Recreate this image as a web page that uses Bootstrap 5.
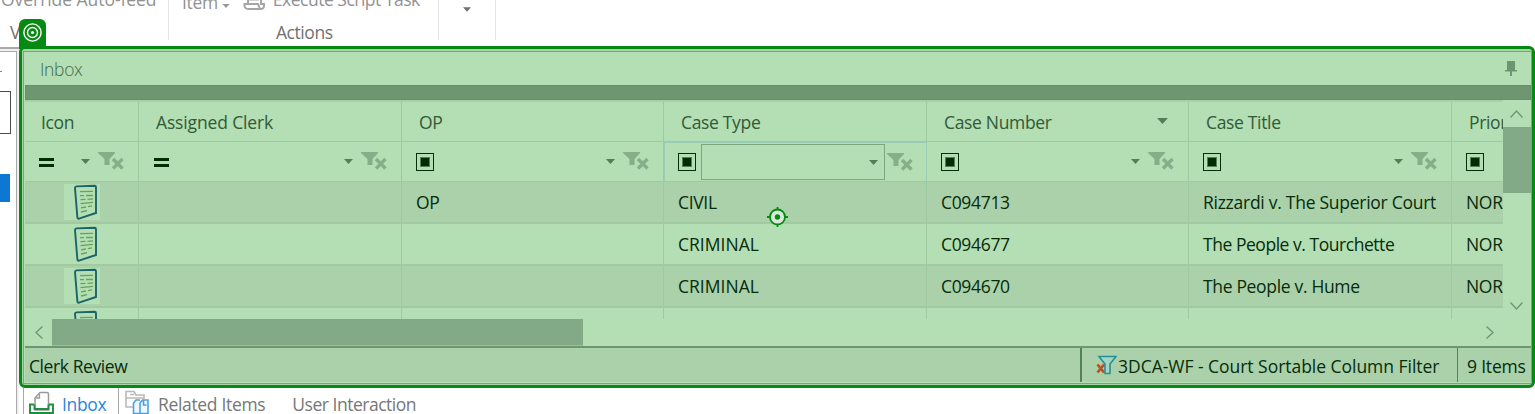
<!DOCTYPE html>
<html lang="en">
<head>
<meta charset="utf-8">
<title>Inbox</title>
<link href="https://cdn.jsdelivr.net/npm/bootstrap@5.3.0/dist/css/bootstrap.min.css" rel="stylesheet">
<style>
body{width:1535px;height:414px;overflow:hidden;background:#fff;font:17.5px/24px "Open Sans","Noto Sans",sans-serif;color:#062c0a;letter-spacing:-.33px;white-space:nowrap}
svg{display:block;flex:none}
.ribbon{height:46px;color:#707070}
.rgroup{height:40px;border-right:1px solid #e4e4e4;position:relative}
.cmd{height:15px;color:#929292;display:flex}
.cmd>span{display:block;margin-top:-13px}
.side{width:19px;height:367px;background:#f0f0f0;border-top:2px solid #a9a9a9;margin-top:1px}
.side-in{width:17px;height:370px;background:#fff;border:1px solid #a9a9a9;border-left:0;margin-top:2px}
.side-tick{width:2px;height:1px;background:#888;margin-top:19px}
.side-box{width:11px;height:43px;border:1px solid #4c4a50;border-left:0;margin-top:19px}
.side-sel{width:10px;height:28px;background:#0d78d4;border:1px solid #7bb2e3;border-left:0;outline:1px solid #0d78d4;outline-offset:-1px;margin-top:40px}
.work{height:342px}
.panel{width:1516px;height:342px;border:3px solid #078a12;border-radius:6px;background:#acd2ac;padding:2px 0 0 1px}
.panel-in{border:1px solid #7ba57e;height:333px;padding-left:1px;background:#b4deb4}
.tag-badge{left:19px;top:19px;width:27px;height:30px;background:#078a12;border-radius:6px 6px 0 0}
.cap{height:33px;background:#b4deb4;color:#41694a;padding:0 14px 0 15px}
.cap span{font-size:17.5px;font-weight:300;margin-top:5px}
.strip{height:15px;background:#6d9671;border:1px solid #66906b}
.gridwrap{height:219px;background:#b4deb4}
.dgrid{width:1478px;overflow:hidden}
.grow{display:grid;grid-template-columns:114px 263px 262px 263px 262px 263px 51px}
.grow>div{border-right:1px solid #9fc9a1;overflow:hidden;display:flex;align-items:center}
.grow>div:last-child{border-right:0}
.ghead{height:42px;border-top:2px solid #a7d0a8;border-bottom:1px solid #9fc9a1;color:#315a37}
.ghead>div{padding-left:17px;padding-top:1px}
.ghead>div:first-child{padding-left:16px}
.gfilt{height:40px;border-bottom:1px solid #9fc9a1}
.gfilt>div{padding-left:14px}
.gfilt>div:first-child{padding-left:13px}
.grec{height:42px;border-bottom:2px solid #a1caa3}
.grec>div{padding-left:14px}
.alt{background:#aad1aa}
.thumb{width:36px;height:36px;background:#b4deb4;margin-left:25px}
.eqs{width:15px;height:9px;border-top:3px solid #032c05;border-bottom:3px solid #032c05;margin:2px 0 0 1px}
.chk{width:18px;height:18px;border:1.5px solid #043007;padding:3px}
.chk:after{content:"";display:block;width:10px;height:10px;background:#032c05;border:1px solid #55805a}
.clr{margin-right:14px;margin-left:8px}
.combo{width:184px;height:36px;border:1px solid #7da680;padding-right:6px;margin-left:5px}
.gfilt>.active-cell{border-left:1px solid #99cdb8;border-right-color:#99cdb8;border-top:1px solid #99cdb8;padding-left:13px}
.vbar{width:28px;background:#b4deb4}
.vthumb{height:66px;background:#83aa86}
.hbar{height:27px;background:#b4deb4}
.hthumb{width:531px;height:27px;background:#83aa86;border-bottom:1px solid #98c09a}
.stat{height:36px;border-top:2px solid #6d9671;background:#aad1aa}
.stat .seg{border-left:2px solid #54805a;height:34px;padding-top:2px}
.wide{letter-spacing:.02px}
.aim{left:767px;top:207px}
.tabs{height:26px;color:#777}
.tabs span{margin-top:4px}
.tab-on{width:96px;margin-left:23px;border-left:1px solid #a9a9a9;border-right:1px solid #a9a9a9;color:#2c86d6}
</style>
</head>
<body>
<svg width="0" height="0" class="position-absolute"><defs>
<symbol id="arrow" viewBox="0 0 9 5"><path d="M0 0h9L4.500 5z" fill="#527f58"/></symbol>
<symbol id="clear" viewBox="0 0 26 19"><path d="M0 0h17v1l-5.500 6v6h-5V7L0 1z" fill="#86ae88"/><path d="M15 7l9.500 9.500M24.500 7L15 16.500" stroke="#86ae88" stroke-width="3.300"/></symbol>
<symbol id="doc" viewBox="0 0 36 36"><path d="M11 4Q11 2.500 12.500 2.400L30.500 1.800Q32 1.800 32 3.300V29L15 34.700Q13.500 35 13.400 33.500z" fill="#b4deb4" stroke="#1c6468" stroke-width="1.900"/><path d="M16 7.700l13-.4M16 11.700h4m2-.2h7M16.500 15.700l5-.4m2 0l5.500-.5M16.500 19.700l12.500-1.400M17 23.800l5-.8m2-.4l4-.8M17 28l6-1.400" stroke="#66a25a" stroke-width="1.300" fill="none"/></symbol>
</defs></svg>

<header class="ribbon d-flex">
  <div class="rgroup" style="width:169px"><div class="cmd ps-1"><span style="margin-left:-3px;letter-spacing:-.05px">Override Auto-feed</span></div><div style="margin:5px 0 0 10px">V</div></div>
  <div class="rgroup" style="width:270px">
    <div class="cmd"><span style="margin:-10px 0 0 13px">Item</span><svg class="ms-1" style="margin-top:4px" width="8" height="4" viewBox="0 0 9 5"><path d="M0 0h9L4.500 5z" fill="#999"/></svg>
    <svg style="margin:-6px 0 0 13px" width="23" height="17" viewBox="0 0 23 17"><path d="M5 3v7H1.500q-.5 5 4 5H18q3.500 0 3-5H18V3M5 10h10l2 5M6 5.500h10" fill="none" stroke="#a5a5a5" stroke-width="2"/></svg><span style="margin-left:7px;letter-spacing:-.5px">Execute Script Task</span></div>
    <div style="margin:5px 0 0 107px;letter-spacing:-.45px">Actions</div>
  </div>
  <div class="rgroup" style="width:57px"><svg style="margin:7px 0 0 24px" width="8" height="5" viewBox="0 0 9 5"><path d="M0 0h9L4.500 5z" fill="#707070"/></svg></div>
</header>

<main class="work d-flex">
  <aside class="side"><div class="side-in"><div class="side-tick"></div><div class="side-box"></div><div class="side-sel"></div></div></aside>
  <section class="panel"><div class="panel-in">
    <div class="cap d-flex justify-content-between align-items-start"><span>Inbox</span>
      <svg style="margin-top:9px" width="12" height="15" viewBox="0 0 12 15"><path d="M2 0h8v9h2v1.500H7V15H5v-4.500H0V9h2z" fill="#6b966f"/></svg></div>
    <div class="strip"></div>
    <div class="gridwrap d-flex">
      <div class="dgrid">
        <div class="grow ghead"><div>Icon</div><div style="letter-spacing:-.15px">Assigned Clerk</div><div>OP</div><div>Case Type</div><div>Case Number<svg class="ms-auto" style="margin-right:20px;margin-top:-3px" width="11" height="6"><use href="#arrow"/></svg></div><div>Case Title</div><div>Priority</div></div>
        <div class="grow gfilt">
          <div><i class="eqs"></i><svg class="ms-auto" width="9" height="5"><use href="#arrow"/></svg><svg class="clr" width="26" height="19"><use href="#clear"/></svg></div>
          <div><i class="eqs"></i><svg class="ms-auto" width="9" height="5"><use href="#arrow"/></svg><svg class="clr" width="26" height="19"><use href="#clear"/></svg></div>
          <div><i class="chk"></i><svg class="ms-auto" width="9" height="5"><use href="#arrow"/></svg><svg class="clr" width="26" height="19"><use href="#clear"/></svg></div>
          <div class="active-cell"><i class="chk"></i><div class="combo d-flex align-items-center"><svg class="ms-auto" width="9" height="5"><use href="#arrow"/></svg></div><svg style="margin-left:2px" width="26" height="19"><use href="#clear"/></svg></div>
          <div><i class="chk"></i><svg class="ms-auto" width="9" height="5"><use href="#arrow"/></svg><svg class="clr" width="26" height="19"><use href="#clear"/></svg></div>
          <div><i class="chk"></i><svg class="ms-auto" width="9" height="5"><use href="#arrow"/></svg><svg class="clr" width="26" height="19"><use href="#clear"/></svg></div>
          <div><i class="chk"></i></div>
        </div>
        <div class="grow grec alt"><div><svg class="thumb" width="36" height="36"><use href="#doc"/></svg></div><div></div><div>OP</div><div>CIVIL</div><div>C094713</div><div style="letter-spacing:-.27px">Rizzardi v. The Superior Court</div><div>NORMAL</div></div>
        <div class="grow grec"><div><svg class="thumb" width="36" height="36"><use href="#doc"/></svg></div><div></div><div></div><div class="wide">CRIMINAL</div><div>C094677</div><div style="letter-spacing:-.46px">The People v. Tourchette</div><div>NORMAL</div></div>
        <div class="grow grec alt"><div><svg class="thumb" width="36" height="36"><use href="#doc"/></svg></div><div></div><div></div><div class="wide">CRIMINAL</div><div>C094670</div><div>The People v. Hume</div><div>NORMAL</div></div>
        <div class="grow grec"><div><svg class="thumb" width="36" height="36"><use href="#doc"/></svg></div><div></div><div></div><div></div><div></div><div></div><div></div></div>
      </div>
      <div class="vbar d-flex flex-column">
        <svg style="margin:10px 0 9px 7px" width="13" height="8" viewBox="0 0 13 8"><path d="M.5 7.500l6-6.500 6 6.500" fill="none" stroke="#6d9671" stroke-width="1.300"/></svg>
        <div class="vthumb"></div>
        <svg class="mt-auto" style="margin:0 0 9px 7px" width="13" height="8" viewBox="0 0 13 8"><path d="M.5.5l6 6.500 6-6.500" fill="none" stroke="#6d9671" stroke-width="1.300"/></svg>
      </div>
    </div>
    <div class="hbar d-flex align-items-center">
      <svg style="margin:0 9px 0 10px" width="8" height="13" viewBox="0 0 8 13"><path d="M7.500.5L1 6.500l6.500 6" fill="none" stroke="#6d9671" stroke-width="1.300"/></svg>
      <div class="hthumb"></div>
      <svg class="ms-auto" style="margin-right:37px" width="8" height="13" viewBox="0 0 8 13"><path d="M.5.5L7 6.500l-6.500 6" fill="none" stroke="#6d9671" stroke-width="1.300"/></svg>
    </div>
    <div class="stat d-flex align-items-center">
      <span class="ps-1 me-auto" style="padding-top:2px;letter-spacing:-.42px">Clerk Review</span>
      <div class="seg d-flex align-items-center" style="width:377px;padding-left:14px">
        <svg style="margin-top:-2px" width="21" height="20" viewBox="0 0 21 20"><path d="M3 1.500h17L14 9v9.500H9V9z" fill="#a4d6c2" stroke="#278f99" stroke-width="1.600"/><path d="M1.500 9.500l6.500 8M8 9.500l-6.500 8" stroke="#b75126" stroke-width="2.700"/></svg>
        <span style="margin-left:1px;letter-spacing:-.03px">3DCA-WF - Court Sortable Column Filter</span></div>
      <div class="seg d-flex align-items-center" style="width:74px;border-left-width:1px;padding-left:9px;letter-spacing:-.2px">9 Items</div>
    </div>
  </div></section>
</main>

<footer class="tabs d-flex">
  <div class="tab-on d-flex"><svg style="margin:3px 0 0 5px" width="25" height="23" viewBox="0 0 25 23"><path d="M6 19V7l5-5.500h7q1.500 0 1.500 1.500v16z" fill="#fff" stroke="#9a9a9a" stroke-width="1.500"/><path d="M10.500 3v4H7" fill="none" stroke="#9a9a9a" stroke-width="1.300"/><path d="M5 13.500H1V22h23v-8.500h-4M5.500 13.500V18h14v-4.500" fill="none" stroke="#1e8f3e" stroke-width="1.900"/></svg><span style="margin-left:8px">Inbox</span></div>
  <svg style="margin:2px 0 0 6px" width="25" height="25" viewBox="0 0 25 25"><path d="M8 17H1V1.500h8L11 5h8v4M1 8h18M5 4.500h4" fill="none" stroke="#b9b9b9" stroke-width="1.600"/><path d="M15 23.500H8.500V13l2.500-3h4M15 23.500h8V10H17.500L15 13zM18.500 10v5h3" fill="#eef7fd" stroke="#4fa2df" stroke-width="1.600"/></svg>
  <span style="margin-left:8px">Related Items</span><span style="margin-left:27px;letter-spacing:-.48px">User Interaction</span>
</footer>

<div class="tag-badge position-absolute"><svg style="margin:4px 0 0 4px" width="19" height="19" viewBox="0 0 19 19" fill="none" stroke="#fff" stroke-width="1.400"><circle cx="9.500" cy="9.500" r="8.600"/><circle cx="9.500" cy="9.500" r="5"/><circle cx="9.500" cy="9.500" r="1.600" fill="#fff" stroke="none"/></svg></div>
<svg class="aim position-absolute" width="21" height="20" viewBox="0 0 21 20"><circle cx="10.500" cy="10" r="7.500" fill="#d9e9d9" stroke="#078a12" stroke-width="1.800"/><circle cx="10.500" cy="10" r="2.700" fill="#078a12"/><path d="M10.500 0v3M10.500 17v3M0 10h3M18 10h3" stroke="#078a12" stroke-width="1.800"/></svg>
<script src="https://cdn.jsdelivr.net/npm/bootstrap@5.3.0/dist/js/bootstrap.bundle.min.js"></script>
</body>
</html>
